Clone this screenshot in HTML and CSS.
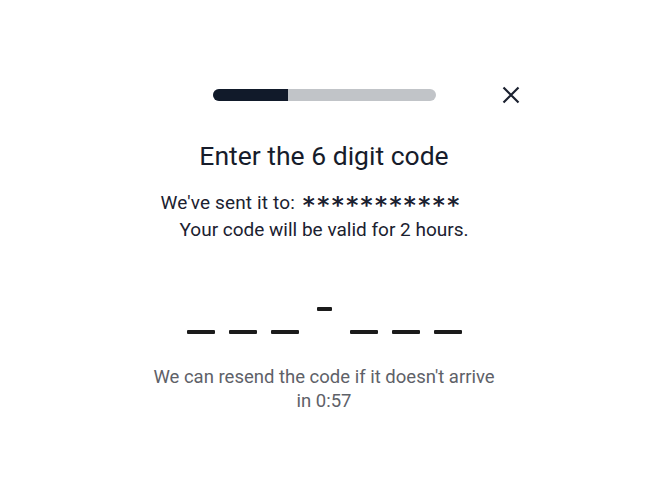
FILE: index.html
```html
<!DOCTYPE html>
<html lang="en">

<head>
    <meta charset="UTF-8">
    <meta name="viewport" content="width=device-width, initial-scale=1.0">
    <title>Verify code</title>
    <link rel="stylesheet" href="styles.css">
</head>

<body>
    <div class="modal">
        <div class="top">
            <div class="progress">
                <div class="progress-fill"></div>
            </div>
            <button class="close-btn" aria-label="Close">
                <svg width="18" height="18" viewBox="0 0 18 18">
                    <path d="M1.5 1.5 L16.5 16.5 M16.5 1.5 L1.5 16.5" stroke="#1b2130" stroke-width="2.2" fill="none" />
                </svg>
            </button>
        </div>

        <h1 class="title">Enter the 6 digit code</h1>

        <p class="sent">We've sent it to: <span class="masked">***********</span></p>
        <p class="valid">Your code will be valid for 2 hours.</p>

        <div class="code">
            <span class="slot"></span>
            <span class="slot"></span>
            <span class="slot"></span>
            <span class="sep"></span>
            <span class="slot"></span>
            <span class="slot"></span>
            <span class="slot"></span>
        </div>

        <p class="resend">We can resend the code if it doesn't arrive<br>in 0:57</p>
    </div>
</body>

</html>
```

FILE: styles.css
```css
* {
    margin: 0;
    padding: 0;
    box-sizing: border-box;
}

body {
    font-family: Roboto, 'Noto Sans', Arial, sans-serif;
    background: #fff;
    color: #1b2130;
}

.modal {
    width: 648px;
    padding-top: 89px;
    display: flex;
    flex-direction: column;
    align-items: center;
}

.top {
    position: relative;
    width: 100%;
    display: flex;
    justify-content: center;
    height: 12px;
}

.progress {
    width: 223px;
    height: 12px;
    border-radius: 6px;
    background: #c1c4c8;
    overflow: hidden;
}

.progress-fill {
    width: 75px;
    height: 100%;
    background: #111a2a;
}

.close-btn {
    position: absolute;
    left: 502px;
    top: -3px;
    width: 18px;
    height: 18px;
    border: none;
    background: none;
    cursor: pointer;
}

.close-btn svg {
    display: block;
}

.title {
    margin-top: 39px;
    font-size: 26.5px;
    font-weight: 400;
    line-height: 32px;
    color: #161c2b;
}

.sent {
    margin-top: 18px;
    font-size: 19px;
    line-height: 26px;
    height: 26px;
    color: #1b2130;
    padding-right: 26px;
    letter-spacing: 0.15px;
}

.masked {
    margin-left: 3px;
    font-family: 'DejaVu Sans', sans-serif;
    font-size: 23px;
    font-weight: bold;
    line-height: 0;
    letter-spacing: 2.4px;
    vertical-align: -4px;
}

.valid {
    margin-top: 1px;
    font-size: 19px;
    line-height: 26px;
    color: #1b2130;
}

.code {
    margin-top: 56px;
    display: flex;
    align-items: flex-start;
    gap: 14px;
    height: 40px;
}

.slot {
    width: 28px;
    height: 4px;
    margin-top: 31px;
    background: #1b1b1b;
    border-radius: 1px;
}

.sep {
    width: 15px;
    height: 4px;
    margin: 8px 4px 0;
    background: #1b1b1b;
    border-radius: 1px;
}

.resend {
    margin-top: 26px;
    font-size: 18.5px;
    line-height: 24px;
    color: #5e6168;
    text-align: center;
}
```
